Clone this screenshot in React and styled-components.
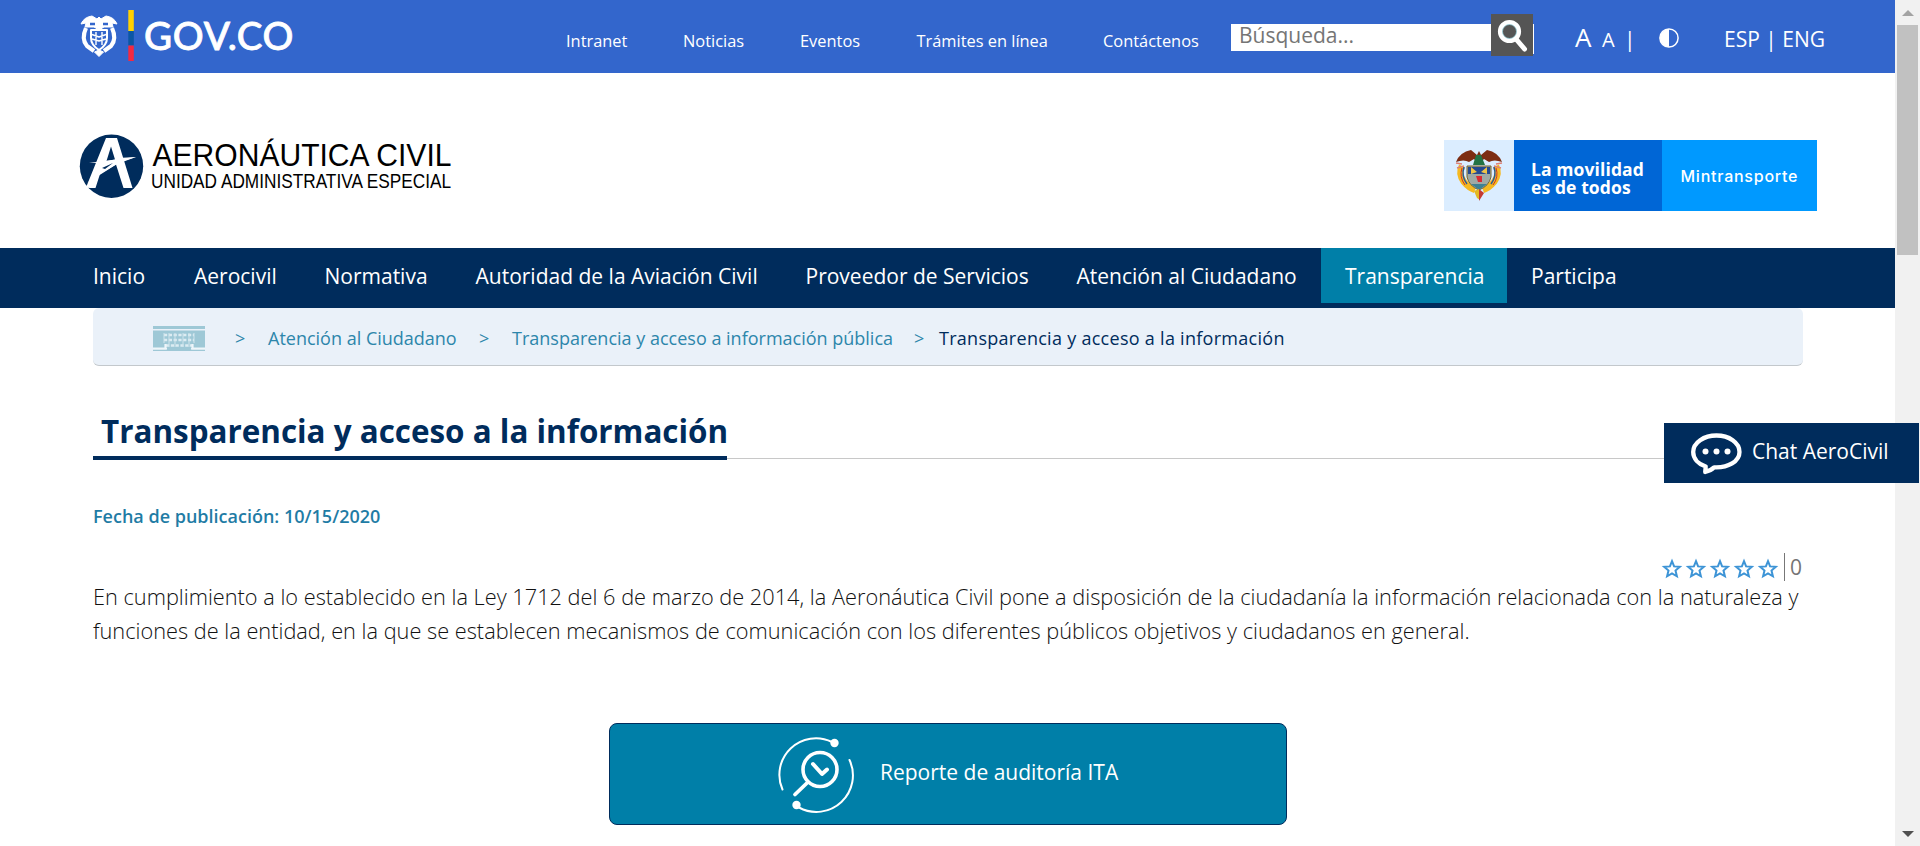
import React from "react";
import styled, { createGlobalStyle } from "styled-components";

const NAVY = "#002c5c";
const TEAL = "#007fa8";

const Global = createGlobalStyle`
  * { box-sizing: border-box; }
  html, body { margin: 0; height: 100%; overflow: hidden; background: #fff; }
  body { font-family: "Open Sans", "Liberation Sans", sans-serif; color: #333; }
  svg { display: block; flex: none; overflow: visible; }
`;

const Screen = styled.div`display: flex; width: 1920px; height: 846px; position: relative;`;
const Page = styled.div`width: 1895px; height: 846px; overflow: hidden;`;

const TopBar = styled.header`
  height: 73px; background: #3366cc; color: #fff; display: flex; align-items: flex-start; padding-left: 80px;
`;
const TopLinks = styled.nav`display: flex; padding: 30px 0 0 271px; width: 936px; flex: none;`;
const TopLink = styled.a`
  font-size: 16.4px; line-height: 22px; white-space: nowrap; flex: none; width: ${p => p.$w}px;
`;
const Search = styled.form`display: flex; align-items: flex-start; margin: 14px 0 0; width: 303px; flex: none;`;
const SearchField = styled.div`
  width: 260px; height: 27px; margin-top: 10px; background: #fff; color: #757575; padding-left: 8px;
  font-size: 21px; line-height: 23px;
`;
const SearchButton = styled.span`width: 42px; height: 42px; background: #555; padding: 5px 0 0 6px;`;
const SearchEdge = styled.span`width: 1px; height: 30px; margin-top: 10px; background: #fff;`;
const Tools = styled.div`display: flex; align-items: baseline; margin-top: 18px; padding-left: 41px; line-height: 38px;`;
const Tool = styled.span`font-size: ${p => p.$size}px; width: ${p => p.$w}px; flex: none; white-space: nowrap;`;
const IconTool = styled.span`width: 65px; flex: none; align-self: flex-start; padding-top: 10px;`;

const Brand = styled.section`height: 175px; display: flex; justify-content: space-between; padding: 61px 78px 0 79px;`;
const Ministry = styled.div`display: flex; width: 373px; height: 71px; margin-top: 6px; color: #fff;`;
const Crest = styled.div`width: 70px; background: #dbedff; padding: 9px 0 0 11px;`;
const Motto = styled.div`
  width: 148px; background: #0066d6; padding: 20px 0 0 17px; font-size: 17.5px; font-weight: 700; line-height: 18px;
  white-space: nowrap; letter-spacing: 0.1px;
`;
const MottoLine = styled.div``;
const MinName = styled.div`width: 155px; background: #0099ff;`;

const MainNav = styled.nav`height: 60px; background: ${NAVY}; display: flex; padding-left: 69px;`;
const NavItem = styled.a`
  height: 55px; width: ${p => p.$w}px; padding-left: 24px; color: #fff; font-size: 21px; line-height: 57px;
  white-space: nowrap; background: ${p => (p.$active ? TEAL : "transparent")};
`;

const Content = styled.main`width: 1710px; margin-left: 93px;`;
const Crumbs = styled.div`
  height: 58px; background: #eaf1f9; border-bottom: 1px solid #c3c8cc; border-radius: 6px; display: flex;
  align-items: flex-start; padding-left: 60px; color: #2d86ab; font-size: 18px; line-height: 60px;
`;
const Crumb = styled.span`
  width: ${p => p.$w}px; white-space: nowrap; color: ${p => (p.$current ? NAVY : "inherit")};
  font-weight: ${p => (p.$current ? 500 : 400)}; letter-spacing: ${p => (p.$current ? 0.28 : 0)}px;
`;
const BuildingBox = styled.span`width: 82px; padding-top: 18px;`;

const TitleRow = styled.div`
  display: flex; margin-top: 40px; height: 54px;
  background: linear-gradient(#c8c8c8, #c8c8c8) 0 52px / 100% 1px no-repeat;
`;
const Title = styled.h1`
  margin: 0; width: 634px; height: 54px; padding-left: 8px; border-bottom: 4px solid ${NAVY}; color: ${NAVY};
  font-size: 31.4px; font-weight: 700; line-height: 49px; white-space: nowrap;
`;
const PublishDate = styled.p`
  margin: 43px 0 0; font-size: 18px; line-height: 26px; font-weight: 600; color: #1f7ca5;
`;
const Rating = styled.div`display: flex; justify-content: flex-end; margin-top: 24px; height: 28px;`;
const Stars = styled.div`display: flex; gap: 4px; padding: 6px 6px 0 0;`;
const Votes = styled.span`
  width: 19px; border-left: 1px solid #777; padding-left: 5px; color: #757575; font-size: 21px; line-height: 29px;
`;
const Paragraph = styled.p`
  margin: -1px 0 0; font-size: 21.76px; line-height: 34px; font-weight: 300; color: #111; white-space: nowrap;
`;
const Line = styled.span`display: block;`;
const AuditButton = styled.a`
  margin: 75px 0 0 516px; width: 678px; height: 102px; border: 1px solid ${NAVY}; border-radius: 8px; background: ${TEAL};
  color: #fff; display: flex; padding: 12px 0 0 167px; font-size: 21px;
`;
const AuditLabel = styled.span`margin-left: 25px; line-height: 72px; white-space: nowrap;`;

const Scrollbar = styled.aside`
  width: 25px; height: 846px; background: #f1f1f1; display: flex; flex-direction: column; justify-content: space-between; align-items: center;
`;
const Thumb = styled.div`width: 21px; height: 230px; background: #c1c1c1; margin-bottom: auto;`;
const Chat = styled.div`
  position: absolute; left: 1664px; top: 423px; width: 255px; height: 60px; background: ${NAVY}; color: #fff;
  display: flex; padding: 8px 0 0 26px; font-size: 21px;
`;
const ChatLabel = styled.span`margin-left: 10px; line-height: 41px; white-space: nowrap;`;

const GovLogo = () => (
  <svg width="215" height="73" viewBox="80 0 215 73">
    <g fill="none" stroke="#fff" strokeLinejoin="round">
      <path d="M81 24 Q84 17 92 16 L97 19 L99 17 L101 19 L106 16 Q114 17 117 24 L112 23 L113 27 L104 27 L99 30 L94 27 L85 27 L86 23 Z" fill="#fff" strokeWidth="1" />
      <path d="M86 28 Q81 39 87 46 L94 51 M112 28 Q117 39 111 46 L104 51" strokeWidth="4.200" />
      <path d="M91 30 H107 V38 Q107 45 99 50 Q91 45 91 38 Z" strokeWidth="2" />
      <path d="M92 34.500 L99 37 L106 34.500 M92 39 L99 41 L106 39 M96 32 V45 M102 32 V45" strokeWidth="1.400" />
      <path d="M94.500 52 L99 50 L103.500 52 L99 56.500 Z" fill="#fff" strokeWidth="1" />
      <path d="M90 24 H95 M103 24 H108" stroke="#3366cc" strokeWidth="2.500" />
    </g>
    <path fill="#ffd100" d="M128.300 10h5.500v21h-5.500z" />
    <path fill="#0b57a4" d="M128.300 31h5.500v14.500h-5.500z" />
    <path fill="#f42941" d="M128.300 45.500h5.500v15.500h-5.500z" />
    <text x="144" y="49.800" textLength="149.500" fill="#fff" stroke="#fff" strokeWidth="0.800" fontFamily="Lato, sans-serif" fontSize="38.500" fontWeight="500">GOV.CO</text>
  </svg>
);

const AeroLogo = () => (
  <svg width="375" height="66" viewBox="79 134 375 66">
    <circle cx="111.500" cy="166.200" r="31.700" fill={NAVY} />
    <path fill="#fff" d="M106 138h11l15.500 50h-9l-7.500-23.500-16 9.500-4.500 14h-5.500l-4-0.500z" />
    <path fill="#fff" d="M87 183 L118 158 L136 157 L117 164 Z" />
    <path fill={NAVY} d="M111 146.500l4 13-8.500 1.500z M102 168l11-5-8 6z" />
    <path fill="#fff" d="M89 163l27-3.500 20-2.500-19 6z" />
    <text x="152.500" y="166.300" textLength="299" lengthAdjust="spacingAndGlyphs" fontFamily="Liberation Sans, sans-serif" fontSize="31">AERONÁUTICA CIVIL</text>
    <text x="151" y="188" textLength="300" lengthAdjust="spacingAndGlyphs" fontFamily="Liberation Sans, sans-serif" fontSize="21">UNIDAD ADMINISTRATIVA ESPECIAL</text>
  </svg>
);

const CoatOfArms = () => (
  <svg width="48" height="54" viewBox="1455 149 48 54">
    <path d="M1462 166q-4 8 2 16 5 6 11 8M1496 166q4 8-2 16-5 6-11 8" fill="none" stroke="#f5b921" strokeWidth="6.500" />
    <path d="M1464 167q-3 9 3 17M1494 167q3 9-3 17" fill="none" stroke="#2458a0" strokeWidth="1.500" />
    <path d="M1462 168q-3 9 3 17M1496 168q3 9-3 17" fill="none" stroke="#c9332b" strokeWidth="1" />
    <path d="M1456 163l6 1M1457 168l7-2M1502 163l-6 1M1501 168l-7-2" stroke="#dd8074" strokeWidth="1.500" />
    <path fill="#7d2d12" d="M1456 162q4-10 15-12l6 5 2-4 2 4 6-5q11 2 15 12-8-3-13 0l-5-3-5 5-5-5-5 3q-5-3-13 0z" />
    <path fill="#227244" d="M1476 155h5l4 10h-12z" />
    <path fill="#9fa9a4" stroke="#77652c" d="M1467 166h24v11q-2 9-12 13-10-4-12-13z" />
    <path fill="#244990" d="M1468 167h22v7h-22z" />
    <path fill="#efc446" d="M1471 167l6 5-6 2zM1487 167l-6 5 6 2z" />
    <path fill="#d92a32" d="M1476 176h6v6h-4z" />
    <path fill="#3e8194" d="M1471 184h16l-8 6z" />
    <path fill="#e4b822" d="M1474 191l5-2 1 11-3-2z" />
    <path fill="#c43b32" d="M1479 189l5 4-5 8z" />
  </svg>
);

const Magnifier = () => (
  <svg width="32" height="34" viewBox="0 0 32 34" fill="none" stroke="#fff">
    <circle cx="12.500" cy="12.500" r="9.300" strokeWidth="4.600" />
    <circle cx="12.500" cy="12.500" r="7" stroke="#8fd0dc" strokeWidth="0.700" />
    <path d="M19 20L27.500 30" strokeWidth="5" strokeLinecap="round" />
  </svg>
);

const Contrast = () => (
  <svg width="20" height="20" viewBox="0 0 20 20">
    <circle cx="10" cy="10" r="9.100" fill="none" stroke="#fff" strokeWidth="1.500" />
    <path d="M10 1a9 9 0 0 0 0 18z" fill="#fff" />
  </svg>
);

const Building = () => (
  <svg width="52" height="25" viewBox="0 0 52 25">
    <path fill="#9ec8d6" d="M0 0h52v3H0zM0 4.500h52V22H0zM0 23.500h52V25H0z" />
    <path d="M11 9h30M11 14h30M13 19.500h26" stroke="#dcecf2" strokeWidth="2.600" strokeDasharray="3.200 1.600" />
    <path d="M11 7v10M41 7v10M16 7v14M36 7v14M22 7v14M30 7v14" stroke="#cfe4ec" strokeWidth="1" />
    <path d="M0 22.500h12.500V18M52 22.500H39.500V18" fill="none" stroke="#eef6fa" strokeWidth="2.200" />
    <path fill="#9ec8d6" d="M14 21.500h24V25H14z" />
  </svg>
);

const Star = () => (
  <svg width="20" height="20" viewBox="0 0 20 20">
    <path d="M10 2.200l2.100 5.200 5.700.4-4.300 3.700 1.400 5.800L10 14.500 5.100 17.300l1.400-5.800L2.200 7.800l5.700-.4z" fill="#fff" stroke="#3d94d6" strokeWidth="2" />
  </svg>
);

const ChatBubble = () => (
  <svg width="52" height="43" viewBox="0 0 52 43">
    <path d="M26.500 4.500C14 4.500 3.200 11.500 3.200 21c0 6.500 5 12 12.500 14.500l-.5 5.500c4-1 7-2.600 9-4.700 14 .7 25.300-6 25.300-15.300 0-9.500-10.500-16.500-23-16.500z" fill="none" stroke="#fff" strokeWidth="4.300" strokeLinejoin="round" />
    <g fill="#fff"><circle cx="15.500" cy="20.500" r="3" /><circle cx="26.500" cy="20.500" r="3" /><circle cx="37.500" cy="20.500" r="3" /></g>
  </svg>
);

const AuditIcon = () => (
  <svg width="78" height="76" viewBox="777 736.500 78 76" fill="none" stroke="#fff" strokeLinecap="round">
    <path d="M782.500 790A36.500 36.500 0 0 1 832 742.500M849.500 760.500A36.500 36.500 0 0 1 799 808" strokeWidth="2" />
    <circle cx="820" cy="770" r="17" strokeWidth="3.600" />
    <path d="M807.500 783L795 795" strokeWidth="3.800" />
    <path d="M813 764.500L822 774.500L827 770" strokeWidth="4" strokeLinejoin="round" />
    <circle cx="834.500" cy="743.500" r="4.200" fill="#fff" stroke="none" />
    <circle cx="796.500" cy="805.500" r="4.200" fill="#fff" stroke="none" />
  </svg>
);

const Arrow = ({ down }) => (
  <svg width="25" height="25" viewBox="0 0 25 25">
    <path fill={down ? "#505050" : "#a3a3a3"} d={down ? "M7 10h12l-6 6z" : "M7 16h12l-6-6z"} />
  </svg>
);

const topLinks = [["Intranet", 117], ["Noticias", 117], ["Eventos", 116.5], ["Trámites en línea", 186.5], ["Contáctenos", 100]];
const navItems = [
  ["Inicio", 101], ["Aerocivil", 130.5], ["Normativa", 151], ["Autoridad de la Aviación Civil", 330],
  ["Proveedor de Servicios", 271], ["Atención al Ciudadano", 268.5], ["Transparencia", 186], ["Participa", 140],
];

export default function App() {
  return (
    <Screen>
      <Global />
      <Page>
        <TopBar>
          <GovLogo />
          <TopLinks>
            {topLinks.map(([t, w]) => <TopLink key={t} $w={w}>{t}</TopLink>)}
          </TopLinks>
          <Search>
            <SearchField>Búsqueda...</SearchField>
            <SearchButton><Magnifier /></SearchButton>
            <SearchEdge />
          </Search>
          <Tools>
            <Tool $size={26} $w={27}>A</Tool>
            <Tool $size={20} $w={22}>A</Tool>
            <Tool $size={21} $w={35}>|</Tool>
            <IconTool><Contrast /></IconTool>
            <Tool $size={21} $w={104}>ESP | ENG</Tool>
          </Tools>
        </TopBar>
        <Brand>
          <AeroLogo />
          <Ministry>
            <Crest><CoatOfArms /></Crest>
            <Motto>
              <MottoLine>La movilidad</MottoLine>
              <MottoLine>es de todos</MottoLine>
            </Motto>
            <MinName>
              <svg width="155" height="71">
                <text x="18.500" y="41.500" textLength="117" fill="#fff" fontFamily="Inter, sans-serif" fontWeight="500" fontSize="16">Mintransporte</text>
              </svg>
            </MinName>
          </Ministry>
        </Brand>
        <MainNav>
          {navItems.map(([t, w]) => <NavItem key={t} $w={w} $active={t === "Transparencia"}>{t}</NavItem>)}
        </MainNav>
        <Content>
          <Crumbs>
            <BuildingBox><Building /></BuildingBox>
            <Crumb $w={33}>&gt;</Crumb>
            <Crumb $w={211}>Atención al Ciudadano</Crumb>
            <Crumb $w={33}>&gt;</Crumb>
            <Crumb $w={402}>Transparencia y acceso a información pública</Crumb>
            <Crumb $w={25}>&gt;</Crumb>
            <Crumb $current>Transparencia y acceso a la información</Crumb>
          </Crumbs>
          <TitleRow><Title>Transparencia y acceso a la información</Title></TitleRow>
          <PublishDate>Fecha de publicación: 10/15/2020</PublishDate>
          <Rating>
            <Stars>{[0, 1, 2, 3, 4].map(i => <Star key={i} />)}</Stars>
            <Votes>0</Votes>
          </Rating>
          <Paragraph>
            <Line>En cumplimiento a lo establecido en la Ley 1712 del 6 de marzo de 2014, la Aeronáutica Civil pone a disposición de la ciudadanía la información relacionada con la naturaleza y</Line>
            <Line>funciones de la entidad, en la que se establecen mecanismos de comunicación con los diferentes públicos objetivos y ciudadanos en general.</Line>
          </Paragraph>
          <AuditButton><AuditIcon /><AuditLabel>Reporte de auditoría ITA</AuditLabel></AuditButton>
        </Content>
      </Page>
      <Scrollbar><Arrow /><Thumb /><Arrow down /></Scrollbar>
      <Chat><ChatBubble /><ChatLabel>Chat AeroCivil</ChatLabel></Chat>
    </Screen>
  );
}
